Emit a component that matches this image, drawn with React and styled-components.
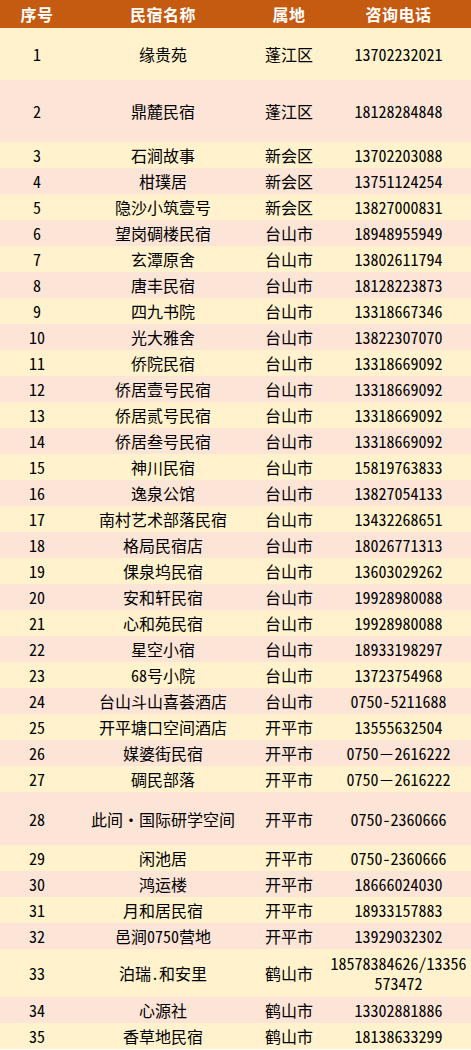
import React from "react";
import styled, { createGlobalStyle } from "styled-components";

const GlobalStyle = createGlobalStyle`
  html, body { margin: 0; padding: 0; background: #ffffff; }
  body { font-family: "Noto Sans Mono CJK SC", "Noto Sans CJK SC", sans-serif; }
`;

const rows = [
  [1, "缘贵苑", "蓬江区", "13702232021", 52],
  [2, "鼎麓民宿", "蓬江区", "18128284848", 62],
  [3, "石涧故事", "新会区", "13702203088"],
  [4, "柑璞居", "新会区", "13751124254"],
  [5, "隐沙小筑壹号", "新会区", "13827000831"],
  [6, "望岗碉楼民宿", "台山市", "18948955949"],
  [7, "玄潭原舍", "台山市", "13802611794"],
  [8, "唐丰民宿", "台山市", "18128223873"],
  [9, "四九书院", "台山市", "13318667346"],
  [10, "光大雅舍", "台山市", "13822307070"],
  [11, "侨院民宿", "台山市", "13318669092"],
  [12, "侨居壹号民宿", "台山市", "13318669092"],
  [13, "侨居贰号民宿", "台山市", "13318669092"],
  [14, "侨居叁号民宿", "台山市", "13318669092"],
  [15, "神川民宿", "台山市", "15819763833"],
  [16, "逸泉公馆", "台山市", "13827054133"],
  [17, "南村艺术部落民宿", "台山市", "13432268651"],
  [18, "格局民宿店", "台山市", "18026771313"],
  [19, "倮泉坞民宿", "台山市", "13603029262"],
  [20, "安和轩民宿", "台山市", "19928980088"],
  [21, "心和苑民宿", "台山市", "19928980088"],
  [22, "星空小宿", "台山市", "18933198297"],
  [23, "68号小院", "台山市", "13723754968"],
  [24, "台山斗山喜荟酒店", "台山市", "0750-5211688"],
  [25, "开平塘口空间酒店", "开平市", "13555632504"],
  [26, "媒婆街民宿", "开平市", "0750－2616222"],
  [27, "碉民部落", "开平市", "0750－2616222"],
  [28, "此间・国际研学空间", "开平市", "0750-2360666", 53],
  [29, "闲池居", "开平市", "0750-2360666"],
  [30, "鸿运楼", "开平市", "18666024030"],
  [31, "月和居民宿", "开平市", "18933157883"],
  [32, "邑涧0750营地", "开平市", "13929032302"],
  [33, "泊瑞.和安里", "鹤山市", "18578384626/13356573472", 48],
  [34, "心源社", "鹤山市", "13302881886"],
  [35, "香草地民宿", "鹤山市", "18138633299"],
];

const Table = styled.div`
  width: 471px;
  display: flex;
  flex-direction: column;
`;

const Grid = styled.div`
  display: grid;
  grid-template-columns: 74px 178px 74px 145px;
  align-items: center;
  height: ${(p) => p.$h}px;
  background: ${(p) => p.$bg};
`;

const HeadCell = styled.div`
  text-align: center;
  color: #ffffff;
  font-family: "Noto Sans CJK SC", sans-serif;
  font-weight: 700;
  font-size: 16px;
  line-height: 20px;
  letter-spacing: 0.5px;
`;

const Cell = styled.div`
  text-align: center;
  color: #000000;
  font-size: 16px;
  line-height: 20px;
  padding: 0 ${(p) => (p.$wrap ? 4 : 0)}px;
  word-break: break-all;
  white-space: ${(p) => (p.$wrap ? "normal" : "nowrap")};
`;

export default function App() {
  return (
    <>
      <GlobalStyle />
      <Table>
        <Grid $h={28} $bg="#C55A11">
          <HeadCell>序号</HeadCell>
          <HeadCell>民宿名称</HeadCell>
          <HeadCell>属地</HeadCell>
          <HeadCell>咨询电话</HeadCell>
        </Grid>
        {rows.map(([n, name, area, phone, h]) => (
          <Grid key={n} $h={h || 26} $bg={n % 2 ? "#FFF2CC" : "#FCE4D6"}>
            <Cell>{n}</Cell>
            <Cell>{name}</Cell>
            <Cell>{area}</Cell>
            <Cell $wrap={phone.length > 15}>{phone}</Cell>
          </Grid>
        ))}
      </Table>
    </>
  );
}
